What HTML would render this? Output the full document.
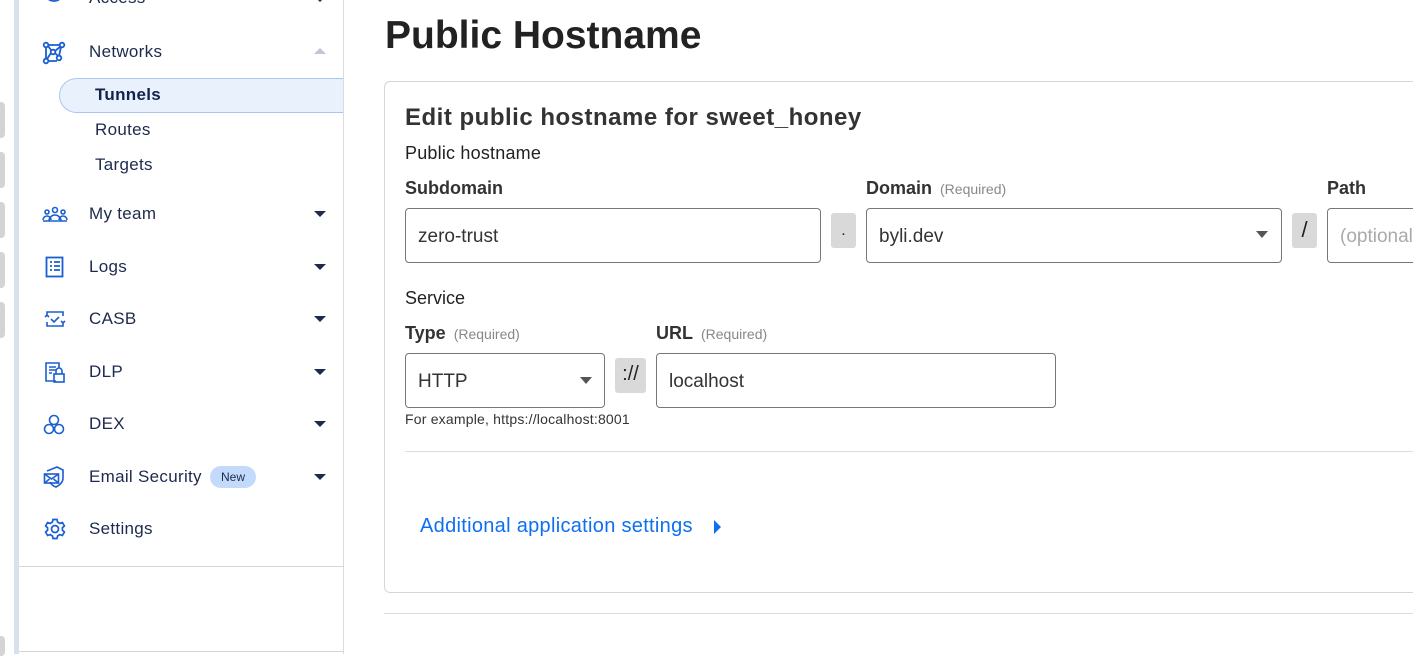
<!DOCTYPE html>
<html><head><meta charset="utf-8"><style>
*{box-sizing:border-box;margin:0;padding:0}
body{width:1413px;height:654px;overflow:hidden;background:#fff;font-family:"Liberation Sans",sans-serif;position:relative;color:#222}
.abs{position:absolute}
.tab{position:absolute;left:0;width:5px;height:36px;background:#d4d4d4;border-radius:0 4px 4px 0}
.vbar{left:14px;top:0;width:5px;height:654px;background:#d9e1ea}
.side{left:19px;top:0;width:325px;height:654px;border-right:1px solid #dcdcdc}
.nav{position:absolute;left:89px;font-size:17px;color:#1d2a4d;letter-spacing:0.3px}
.sub{position:absolute;left:95px;font-size:17px;color:#1d2a4d;letter-spacing:0.3px}
.caret{position:absolute;left:314px;width:0;height:0;border-left:6px solid transparent;border-right:6px solid transparent;border-top:6px solid #1d2a4d}
.ic{position:absolute;left:42px}
.lbl{position:absolute;font-size:18px;font-weight:bold;color:#333}
.req{font-size:14px;font-weight:normal;color:#888;margin-left:8px}
.inp{position:absolute;height:55px;border:1px solid #777;border-radius:4px;font-size:19px;color:#333;padding-left:12px;line-height:55px}
.sep{position:absolute;background:#d9d9d9;border-radius:3px;text-align:center;color:#222}
.dd{position:absolute;width:0;height:0;border-left:6px solid transparent;border-right:6px solid transparent;border-top:7px solid #555}
</style></head><body>
<div class="tab" style="top:102px"></div>
<div class="tab" style="top:152px"></div>
<div class="tab" style="top:202px"></div>
<div class="tab" style="top:252px"></div>
<div class="tab" style="top:302px"></div>
<div class="tab" style="top:636px;height:20px"></div>
<div class="abs vbar"></div>
<div class="abs side"></div>
<div class="abs" style="left:19px;top:566px;width:325px;height:1px;background:#d6d6d6"></div>
<div class="abs" style="left:19px;top:651px;width:325px;height:1px;background:#d6d6d6"></div>

<div class="nav" style="top:-12px">Access</div>
<div class="caret" style="top:-4px"></div>
<svg class="ic" style="top:-10px" width="24" height="16"><path d="M3 2 A9 9 0 0 0 21 2" fill="none" stroke="#1a5ed0" stroke-width="1.8"/></svg>

<svg class="ic" style="top:41px" width="24" height="24" fill="none" stroke="#1a5ed0" stroke-width="1.8"><circle cx="4" cy="4" r="2.3"/><circle cx="20" cy="4" r="2.3"/><circle cx="4" cy="20" r="2.3"/><circle cx="17" cy="17" r="2.3"/><circle cx="11" cy="11" r="2.3"/><path d="M6 4H18M4 6V18M6 20H15M19 6L17 15M6 5L9 9M13 12L16 15M13 10L19 5M9 12L5 18"/></svg>
<div class="nav" style="top:42px">Networks</div>
<div class="abs" style="left:314px;top:48px;border-left:6px solid transparent;border-right:6px solid transparent;border-bottom:6px solid #bfc7d3;width:0;height:0"></div>

<div class="abs" style="left:59px;top:78px;width:284px;height:35px;background:#e9f1fd;border:1px solid #a9c6f3;border-right:none;border-radius:18px 0 0 18px"></div>
<div class="sub" style="top:85px;font-weight:bold;color:#12224a">Tunnels</div>
<div class="sub" style="top:120px">Routes</div>
<div class="sub" style="top:155px">Targets</div>

<svg class="ic" style="top:206px" width="26" height="18" fill="none" stroke="#1a5ed0" stroke-width="1.6"><circle cx="5" cy="6" r="2"/><circle cx="13" cy="4" r="2.5"/><circle cx="21" cy="6" r="2"/><path d="M1 14a4 4 0 0 1 8 0M7 15a6 6 0 0 1 12 0M17 14a4 4 0 0 1 8 0M1 15H25"/></svg>
<div class="nav" style="top:204px">My team</div><div class="caret" style="top:211px"></div>

<svg class="ic" style="top:256px;left:45px" width="20" height="22" fill="none" stroke="#1a5ed0" stroke-width="1.8"><rect x="1.5" y="1.5" width="16" height="19"/><path d="M5 6h2M9 6h6M5 10h2M9 10h6M5 14h2M9 14h6"/></svg>
<div class="nav" style="top:257px">Logs</div><div class="caret" style="top:264px"></div>

<svg class="ic" style="top:309px;left:44px" width="22" height="20" fill="none" stroke="#1a5ed0" stroke-width="1.6"><path d="M3 6V3h16v4M19 14v3H3v-4M1 8l2-2 2 2M17 12l2 2 2-2M7 10l3 3 5-5"/></svg>
<div class="nav" style="top:309px">CASB</div><div class="caret" style="top:316px"></div>

<svg class="ic" style="top:361px;left:44px" width="22" height="22" fill="none" stroke="#1a5ed0" stroke-width="1.6"><path d="M12 20H2V2h13v5M5 6h7M5 9h7M5 12h3"/><rect x="10" y="13" width="10" height="8"/><path d="M12 13v-3a3 3 0 0 1 6 0v3"/></svg>
<div class="nav" style="top:362px">DLP</div><div class="caret" style="top:369px"></div>

<svg class="ic" style="top:414px;left:43px" width="22" height="22" fill="none" stroke="#1a5ed0" stroke-width="1.6"><circle cx="11" cy="6" r="4.5"/><circle cx="6" cy="15" r="4.5"/><circle cx="16" cy="15" r="4.5"/></svg>
<div class="nav" style="top:414px">DEX</div><div class="caret" style="top:421px"></div>

<svg class="ic" style="top:466px;left:43px" width="22" height="22" fill="none" stroke="#1a5ed0" stroke-width="1.6"><path d="M4 5l10-4 6 3v8c0 4-3 7-7 9-3-1-5-3-6-5"/><rect x="1.5" y="8" width="14" height="9"/><path d="M1.5 8l7 5 7-5M1.5 17l5-4M15.5 17l-5-4"/></svg>
<div class="nav" style="top:467px">Email Security</div>
<div class="abs" style="left:210px;top:466px;width:46px;height:22px;border-radius:11px;background:#c4dafc;font-size:12px;color:#1d2a4d;text-align:center;line-height:22px">New</div>
<div class="caret" style="top:474px"></div>

<svg class="ic" style="top:518px;left:44px" width="22" height="22" fill="none" stroke="#1a5ed0" stroke-width="1.7"><circle cx="11" cy="11" r="3.5"/><path d="M9 1.5h4l.6 2.6 2.3 1.3 2.5-.9 2 3.4-2 1.8v2.6l2 1.8-2 3.4-2.5-.9-2.3 1.3-.6 2.6H9l-.6-2.6-2.3-1.3-2.5.9-2-3.4 2-1.8V9.7l-2-1.8 2-3.4 2.5.9 2.3-1.3z"/></svg>
<div class="nav" style="top:519px">Settings</div>

<div class="abs" style="left:385px;top:14px;font-size:39px;font-weight:bold;color:#222">Public Hostname</div>
<div class="abs" style="left:384px;top:81px;width:1100px;height:512px;border:1px solid #d6d6d6;border-radius:6px"></div>
<div class="abs" style="left:384px;top:613px;width:1100px;height:1px;background:#dcdcdc"></div>

<div class="abs" style="left:405px;top:104px;font-size:24px;font-weight:bold;color:#333;letter-spacing:0.5px">Edit public hostname for sweet_honey</div>
<div class="abs" style="left:405px;top:143px;font-size:18px;color:#222;letter-spacing:0.2px">Public hostname</div>
<div class="lbl" style="left:405px;top:178px">Subdomain</div>
<div class="lbl" style="left:866px;top:178px">Domain<span class="req">(Required)</span></div>
<div class="lbl" style="left:1327px;top:178px">Path</div>
<div class="inp" style="left:405px;top:208px;width:416px">zero-trust</div>
<div class="sep" style="left:831px;top:213px;width:25px;height:35px;line-height:35px;font-size:16px">.</div>
<div class="inp" style="left:866px;top:208px;width:416px">byli.dev</div>
<div class="dd" style="left:1256px;top:231px"></div>
<div class="sep" style="left:1292px;top:213px;width:25px;height:35px;line-height:33px;font-size:22px">/</div>
<div class="inp" style="left:1327px;top:208px;width:200px;color:#aaa">(optional)</div>

<div class="abs" style="left:405px;top:288px;font-size:18px;color:#222">Service</div>
<div class="lbl" style="left:405px;top:323px">Type<span class="req">(Required)</span></div>
<div class="lbl" style="left:656px;top:323px">URL<span class="req">(Required)</span></div>
<div class="inp" style="left:405px;top:353px;width:200px">HTTP</div>
<div class="dd" style="left:580px;top:377px"></div>
<div class="sep" style="left:615px;top:358px;width:31px;height:35px;line-height:33px;font-size:20px">://</div>
<div class="inp" style="left:656px;top:353px;width:400px">localhost</div>
<div class="abs" style="left:405px;top:411px;font-size:14px;color:#333;letter-spacing:0.2px">For example, https://localhost:8001</div>
<div class="abs" style="left:405px;top:451px;width:1010px;height:1px;background:#dcdcdc"></div>
<div class="abs" style="left:420px;top:515px;font-size:20px;color:#0e6ff0;letter-spacing:0.3px">Additional application settings</div>
<div class="abs" style="left:714px;top:520px;border-top:7px solid transparent;border-bottom:7px solid transparent;border-left:7px solid #0e6ff0;width:0;height:0"></div>
</body></html>
